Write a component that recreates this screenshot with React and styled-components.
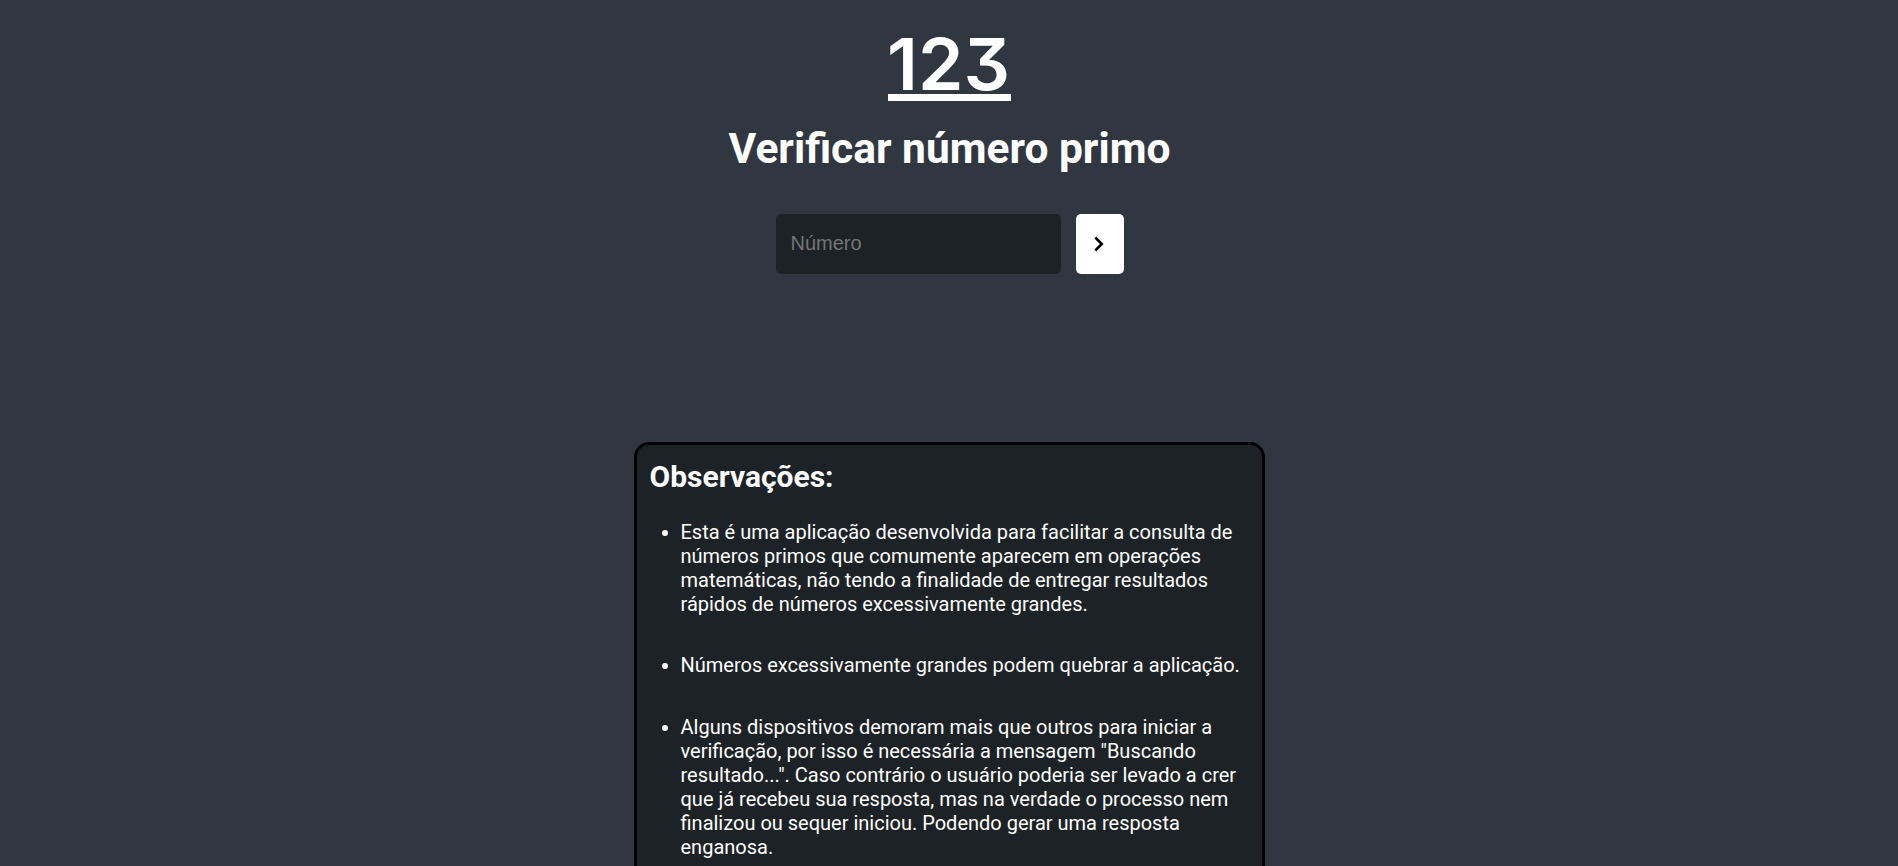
import React from "react";
import styled, { createGlobalStyle } from "styled-components";

const GlobalStyle = createGlobalStyle`
  * { box-sizing: border-box; margin: 0; padding: 0; }
  html, body { height: 100%; overflow: hidden; }
  body { background: #313740; color: #fff; font-family: Roboto, sans-serif; }
`;

const Page = styled.main`
  height: 866px;
  overflow: hidden;
  display: flex;
  flex-direction: column;
  align-items: center;
  padding: 10px 0 0 1px;
`;

const Logo = styled.svg`
  display: block;
  width: 143px;
  height: 110px;
  flex: none;
`;

const Digits = styled.text`
  font-family: Inter, sans-serif;
  font-weight: 600;
  font-size: 71.5px;
  font-feature-settings: "cv09";
  fill: #fff;
`;

const Title = styled.h1`
  margin-top: 3px;
  font-size: 42.5px;
  line-height: 52px;
  font-weight: 700;
  white-space: nowrap;
`;

const Form = styled.form`
  display: flex;
  gap: 15px;
  margin-top: 39px;
`;

const NumberInput = styled.input`
  width: 285px;
  height: 60px;
  padding: 0 15px 2px;
  border: 0;
  border-radius: 5px;
  background: #1d2226;
  color: #fff;
  font: 20px "Liberation Sans", Arial, sans-serif;
  &::placeholder { color: #757575; }
`;

const SubmitButton = styled.button`
  width: 48px;
  height: 60px;
  display: grid;
  place-items: center;
  border: 0;
  border-radius: 5px;
  background: #fff;
`;

const Chevron = styled.svg`
  width: 10px;
  height: 16px;
  margin-right: 2px;
`;

const Notes = styled.section`
  width: 631px;
  margin-top: 168px;
  padding: 12px 12.5px;
  flex: none;
  height: 520px;
  border: 3px solid #000;
  border-radius: 15px;
  background: #1d2226;
`;

const NotesTitle = styled.h2`
  font-size: 30px;
  line-height: 39px;
  font-weight: 700;
`;

const NotesList = styled.ul`
  margin-top: 24px;
  padding-left: 31px;
  display: flex;
  flex-direction: column;
  gap: 37.4px;
`;

const Note = styled.li`
  font-size: 20px;
  line-height: 24px;
  white-space: pre-line;
`;

const notes = [
  `Esta é uma aplicação desenvolvida para facilitar a consulta de
números primos que comumente aparecem em operações
matemáticas, não tendo a finalidade de entregar resultados
rápidos de números excessivamente grandes.`,
  "Números excessivamente grandes podem quebrar a aplicação.",
  `Alguns dispositivos demoram mais que outros para iniciar a
verificação, por isso é necessária a mensagem "Buscando
resultado...". Caso contrário o usuário poderia ser levado a crer
que já recebeu sua resposta, mas na verdade o processo nem
finalizou ou sequer iniciou. Podendo gerar uma resposta
enganosa.`,
];

export default function App() {
  return (
    <>
      <GlobalStyle />
      <Page>
        <Logo viewBox="0 0 143 110" aria-label="123">
          <Digits x="9" y="80" textLength="123" lengthAdjust="spacingAndGlyphs">123</Digits>
          <rect x="10" y="84" width="123" height="7" fill="#fff" />
        </Logo>
        <Title>Verificar número primo</Title>
        <Form onSubmit={(e) => e.preventDefault()}>
          <NumberInput placeholder="Número" />
          <SubmitButton aria-label="Verificar">
            <Chevron viewBox="0 0 10 16">
              <path d="M1.3 1.5 7.8 8 1.3 14.5" fill="none" stroke="#000" strokeWidth="2.5" />
            </Chevron>
          </SubmitButton>
        </Form>
        <Notes>
          <NotesTitle>Observações:</NotesTitle>
          <NotesList>
            {notes.map((note) => (
              <Note key={note}>{note}</Note>
            ))}
          </NotesList>
        </Notes>
      </Page>
    </>
  );
}
